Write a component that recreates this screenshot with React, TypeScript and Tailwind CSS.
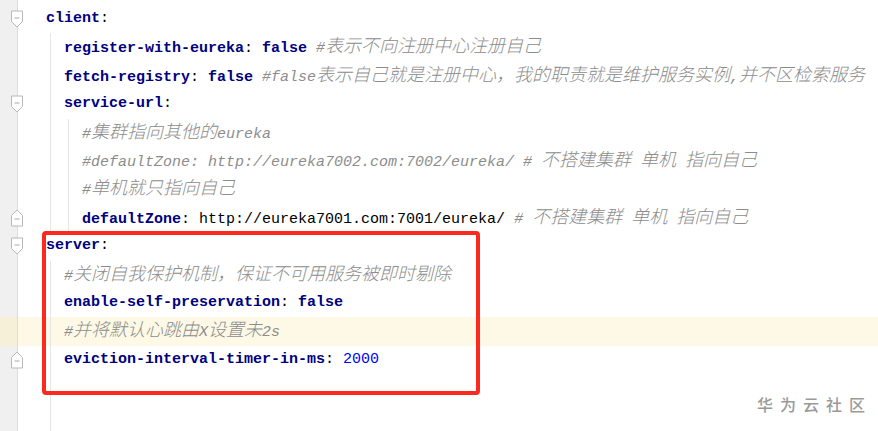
import React from 'react'

type Kind = 'k' | 'p' | 'b' | 's' | 'n' | 'c'
type Tok = [string, Kind]
type Line = {
    indent: number
    toks: Tok[]
    fold?: 'open' | 'close'
    hl?: boolean
}

const kindClass: Record<Kind, string> = {
    k: 'font-bold text-[#000080]',
    p: 'text-black',
    b: 'font-bold text-[#000080]',
    s: 'text-black',
    n: 'text-[#0000ff]',
    c: 'italic text-[#8c8c8c]',
}

const lines: Line[] = [
    { indent: 0, fold: 'open', toks: [['client', 'k'], [':', 'p']] },
    { indent: 1, toks: [['register-with-eureka', 'k'], [': ', 'p'], ['false', 'b'], [' ', 'p'], ['#表示不向注册中心注册自己', 'c']] },
    { indent: 1, toks: [['fetch-registry', 'k'], [': ', 'p'], ['false', 'b'], [' ', 'p'], ['#false表示自己就是注册中心，我的职责就是维护服务实例,并不区检索服务', 'c']] },
    { indent: 1, fold: 'open', toks: [['service-url', 'k'], [':', 'p']] },
    { indent: 2, toks: [['#集群指向其他的eureka', 'c']] },
    { indent: 2, toks: [['#defaultZone: http://eureka7002.com:7002/eureka/ # 不搭建集群 单机 指向自己', 'c']] },
    { indent: 2, toks: [['#单机就只指向自己', 'c']] },
    { indent: 2, fold: 'close', toks: [['defaultZone', 'k'], [': ', 'p'], ['http://eureka7001.com:7001/eureka/', 's'], [' ', 'p'], ['# 不搭建集群 单机 指向自己', 'c']] },
    { indent: 0, fold: 'open', toks: [['server', 'k'], [':', 'p']] },
    { indent: 1, toks: [['#关闭自我保护机制，保证不可用服务被即时剔除', 'c']] },
    { indent: 1, toks: [['enable-self-preservation', 'k'], [': ', 'p'], ['false', 'b']] },
    { indent: 1, hl: true, toks: [['#并将默认心跳由X设置未2s', 'c']] },
    { indent: 1, fold: 'close', toks: [['eviction-interval-timer-in-ms', 'k'], [': ', 'p'], ['2000', 'n']] },
    { indent: 1, toks: [] },
    { indent: 1, toks: [] },
]

// CJK glyphs are drawn at 18px so they take two 9px mono cells
const renderText = (text: string) =>
    text.split(/([\u3000-\u303f\u4e00-\u9fff\uff00-\uffef]+)/).map((part, i) =>
        /[\u3000-\u303f\u4e00-\u9fff\uff00-\uffef]/.test(part) ? (
            <span key={i} className="text-[18px] font-light">
                {part}
            </span>
        ) : (
            <React.Fragment key={i}>{part}</React.Fragment>
        )
    )

const FoldMarker = ({ type }: { type: 'open' | 'close' }) => (
    <svg
        width="14"
        height="19"
        viewBox="0 0 14 19"
        className="absolute left-[10px] top-1/2 -translate-y-1/2"
    >
        {type === 'open' ? (
            <path d="M1.5 1.5 H12.5 V12 L7 17.5 L1.5 12 Z" fill="#fff" stroke="#b8b8b8" />
        ) : (
            <path d="M1.5 17.5 H12.5 V7 L7 1.5 L1.5 7 Z" fill="#fff" stroke="#b8b8b8" />
        )}
        <path d={type === 'open' ? 'M4.5 8.5 H9.5' : 'M4.5 10.5 H9.5'} stroke="#a8a8a8" strokeWidth="1.2" />
    </svg>
)

export default function App() {
    return (
        <div className="relative w-[878px] h-[431px] overflow-hidden bg-white font-['Liberation_Mono','Noto_Sans_CJK_SC',monospace] text-[15px]">
            <div className="flex flex-col h-full">
                {/* gutter strip above the first line */}
                <div className="flex h-[5px] flex-none">
                    <div className="w-[18px] h-full bg-[#f0f0f0] border-r border-[#dcdcdc]" />
                </div>
                {lines.map((line, idx) => (
                    <div
                        key={idx}
                        className={`flex h-[28.4px] flex-none items-stretch ${line.hl ? 'bg-[#fdf9e6]' : ''}`}
                    >
                        <div
                            className={`relative w-[18px] flex-none border-r border-[#dcdcdc] ${line.hl ? 'bg-[#f6f0d8]' : 'bg-[#f0f0f0]'}`}
                        >
                            {line.fold && <FoldMarker type={line.fold} />}
                        </div>
                        <div className="flex items-stretch pl-[28px] whitespace-pre leading-[28.4px]">
                            {Array.from({ length: line.indent }).map((_, g) => (
                                <div key={g} className="w-[18px] flex-none pl-[4px]">
                                    <div className="w-px h-full bg-[#e6e6e6]" />
                                </div>
                            ))}
                            <div className="flex-none">
                                {line.toks.map(([text, kind], t) => (
                                    <span key={t} className={kindClass[kind]}>
                                        {renderText(text)}
                                    </span>
                                ))}
                            </div>
                        </div>
                    </div>
                ))}
                <div className="flex flex-1">
                    <div className="w-[18px] bg-[#f0f0f0] border-r border-[#dcdcdc]" />
                </div>
            </div>

            {/* highlight box */}
            <div className="absolute left-[42px] top-[231px] w-[438px] h-[164px] border-[4px] border-[#fc2a1e] rounded-[4px]" />

            {/* watermark */}
            <div className="absolute right-[6px] bottom-[15px] text-[16px] tracking-[7px] text-[#9a9a9a] font-['Noto_Sans_CJK_SC',sans-serif] font-medium">
                华为云社区
            </div>
        </div>
    )
}
